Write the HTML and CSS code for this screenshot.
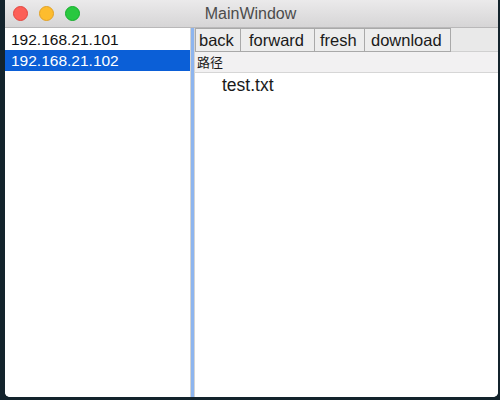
FILE: index.html
```html
<!DOCTYPE html>
<html>
<head>
<meta charset="utf-8">
<link rel="stylesheet" href="styles.css">
</head>
<body>
<div class="desk">
  <div class="window">
    <div class="titlebar">
      <div class="lights">
        <span class="light red"></span>
        <span class="light yellow"></span>
        <span class="light green"></span>
      </div>
      <div class="title">MainWindow</div>
    </div>
    <div class="content">
      <div class="hosts">
        <div class="host">192.168.21.101</div>
        <div class="host selected">192.168.21.102</div>
      </div>
      <div class="splitter"><div class="grip"></div></div>
      <div class="browser">
        <div class="toolbar">
          <div class="btn b-back">back</div>
          <div class="btn b-forward">forward</div>
          <div class="btn b-fresh">fresh</div>
          <div class="btn b-download">download</div>
        </div>
        <div class="header">路径</div>
        <div class="files">
          <div class="file">test.txt</div>
        </div>
      </div>
    </div>
  </div>
</div>
</body>
</html>
```
FILE: styles.css
```css
html, body {
  margin: 0;
  padding: 0;
  width: 500px;
  height: 400px;
  overflow: hidden;
  background: #13232c;
  font-family: "Liberation Sans", Arial, sans-serif;
}
.desk {
  display: flex;
  padding-left: 5px;
  height: 400px;
}
.window {
  width: 493px;
  height: 397px;
  background: #ffffff;
  border-radius: 0 0 5px 5px;
  overflow: hidden;
  display: flex;
  flex-direction: column;
}
.titlebar {
  height: 27px;
  flex: none;
  background: linear-gradient(#ebeaeb, #d6d5d6);
  border-bottom: 1px solid #b9b8b9;
  display: flex;
  align-items: center;
  position: relative;
}
.lights {
  display: flex;
  gap: 11px;
  padding-left: 8px;
  position: relative;
  z-index: 1;
}
.light {
  width: 15px;
  height: 15px;
  border-radius: 50%;
  box-sizing: border-box;
}
.red { background: #fc5f57; border: 1px solid #e2463f; }
.yellow { background: #fdbc2e; border: 1px solid #e1a126; }
.green { background: #29c840; border: 1px solid #14ae2b; }
.title {
  position: absolute;
  left: 0;
  right: 0;
  top: 0;
  bottom: 0;
  display: flex;
  align-items: center;
  justify-content: center;
  font-size: 16px;
  color: #4c4c4c;
  padding-right: 2px;
}
.content {
  flex: 1;
  display: flex;
  min-height: 0;
}
.hosts {
  width: 185px;
  flex: none;
  background: #ffffff;
  padding-top: 1px;
}
.host {
  height: 21px;
  line-height: 21px;
  padding-left: 6px;
  font-size: 15.5px;
  color: #111111;
}
.host.selected {
  background: #0b5fd7;
  color: #ffffff;
}
.splitter {
  width: 5px;
  flex: none;
  background: #d4d4d4;
  display: flex;
  justify-content: center;
}
.grip {
  width: 3px;
  background: #8db5ef;
}
.browser {
  flex: 1;
  display: flex;
  flex-direction: column;
  background: #ffffff;
}
.toolbar {
  height: 24px;
  flex: none;
  display: flex;
  background: #e9e9e9;
  border-bottom: 1px solid #d0d0d0;
  box-sizing: border-box;
}
.btn {
  box-sizing: border-box;
  height: 24px;
  border: 1px solid #a9a9a9;
  margin-left: -1px;
  background: #ededed;
  font-size: 16.5px;
  color: #1a1a1a;
  display: flex;
  align-items: center;
  padding-left: 3px;
}
.b-back { width: 46px; margin-left: 0; }
.b-forward { width: 75px; padding-left: 8px; }
.b-fresh { width: 51px; padding-left: 5px; }
.b-download { width: 87px; padding-left: 6px; }
.header {
  height: 21px;
  flex: none;
  box-sizing: border-box;
  background: #f2f1f2;
  border-bottom: 1px solid #d6d6d6;
  font-family: "Noto Sans CJK SC", sans-serif;
  font-size: 13px;
  line-height: 20px;
  padding-left: 2px;
  color: #1a1a1a;
}
.files {
  flex: 1;
  padding-top: 2px;
}
.file {
  padding-left: 27px;
  font-size: 17.5px;
  line-height: 20px;
  color: #1a1a1a;
}
```
